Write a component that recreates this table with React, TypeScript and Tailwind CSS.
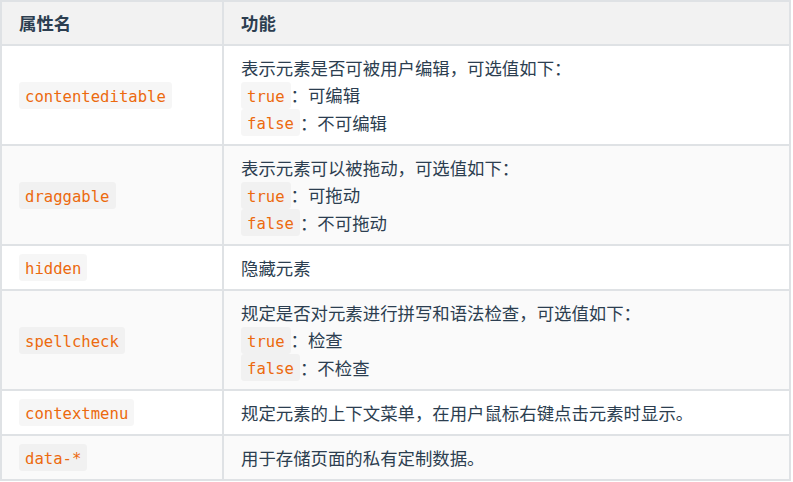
import React from "react";

type Row = { name: string; desc: string; opts?: [string, string][] };

const rows: Row[] = [
  {
    name: "contenteditable",
    desc: "表示元素是否可被用户编辑，可选值如下：",
    opts: [
      ["true", "可编辑"],
      ["false", "不可编辑"],
    ],
  },
  {
    name: "draggable",
    desc: "表示元素可以被拖动，可选值如下：",
    opts: [
      ["true", "可拖动"],
      ["false", "不可拖动"],
    ],
  },
  { name: "hidden", desc: "隐藏元素" },
  {
    name: "spellcheck",
    desc: "规定是否对元素进行拼写和语法检查，可选值如下：",
    opts: [
      ["true", "检查"],
      ["false", "不检查"],
    ],
  },
  { name: "contextmenu", desc: "规定元素的上下文菜单，在用户鼠标右键点击元素时显示。" },
  { name: "data-*", desc: "用于存储页面的私有定制数据。" },
];

function Code({ children }: { children: React.ReactNode }) {
  return (
    <code className="inline-block h-[27px] rounded-[3px] bg-[rgba(0,0,0,0.035)] px-[6px] pt-[3px] font-['DejaVu_Sans_Mono',monospace] text-[15.6px] leading-[24px] text-[#ec6a0e]">
      {children}
    </code>
  );
}

export default function App() {
  return (
    <div className="h-[482px] w-[793px] bg-white font-['Noto_Sans_CJK_SC',sans-serif] text-[17.4px] leading-[27.5px] text-[#2c3e50]">
      <div className="grid w-[791px] grid-cols-[222px_567px] border-l-2 border-t-2 border-[#dfe2e5]">
        <div className="h-[44px] border-b-2 border-r-2 border-[#dfe2e5] bg-[#f2f2f2] py-[7.25px] pl-[17px] font-bold">
          属性名
        </div>
        <div className="h-[44px] border-b-2 border-r-2 border-[#dfe2e5] bg-[#f2f2f2] py-[7.25px] pl-[17px] font-bold">
          功能
        </div>
        {rows.map((r, i) => {
          const bg = i % 2 === 1 ? "bg-[#fafafa]" : "bg-white";
          return (
            <React.Fragment key={r.name}>
              <div
                className={`flex items-center border-b-2 border-r-2 border-[#dfe2e5] pl-[17px] ${bg}`}
              >
                <Code>{r.name}</Code>
              </div>
              <div
                className={`border-b-2 border-r-2 border-[#dfe2e5] py-[7.75px] pl-[17px] ${bg}`}
              >
                <div className="h-[27.5px]">{r.desc}</div>
                {r.opts?.map(([k, v]) => (
                  <div key={k} className="flex h-[27.5px] items-center">
                    <Code>{k}</Code>
                    <span>：{v}</span>
                  </div>
                ))}
              </div>
            </React.Fragment>
          );
        })}
      </div>
    </div>
  );
}
